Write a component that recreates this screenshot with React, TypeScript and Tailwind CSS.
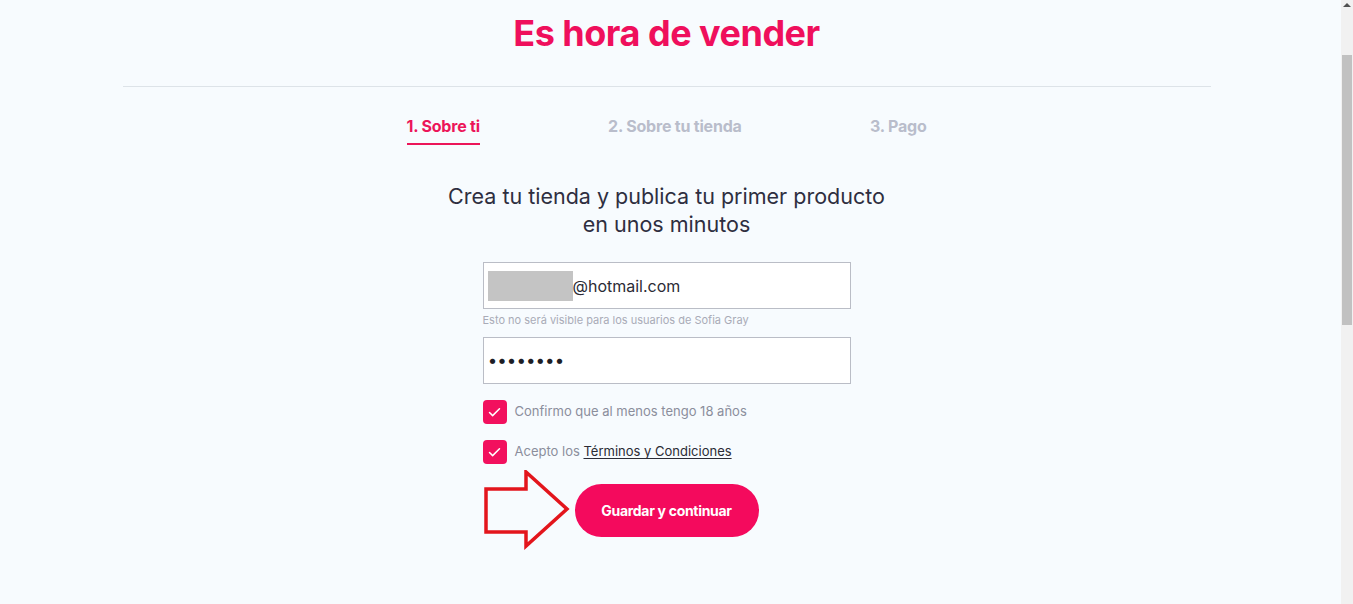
import { Check } from "lucide-react";

const font = { fontFamily: "Inter, 'Noto Sans', sans-serif" };

function StepTabs() {
  return (
    <div className="mx-auto flex w-[520px] justify-between text-[16px] font-bold tracking-[-0.2px]">
      <div className="flex flex-col items-start">
        <span className="text-[#ec1559]">1. Sobre ti</span>
        <span className="mt-[5px] h-[2px] w-full bg-[#ec1559]" />
      </div>
      <span className="text-[#b9bdcb]">2. Sobre tu tienda</span>
      <span className="text-[#b9bdcb]">3. Pago</span>
    </div>
  );
}

function CheckRow({ children }: { children: React.ReactNode }) {
  return (
    <div className="flex items-center gap-2">
      <div className="flex h-6 w-6 items-center justify-center rounded-[4px] bg-[#f2105e]">
        <Check className="h-[15px] w-[15px] text-white" strokeWidth={2.4} />
      </div>
      <span className="text-[13px] text-[#8b8e9c]">{children}</span>
    </div>
  );
}

function Arrow() {
  return (
    <svg width="88" height="80" viewBox="0 0 88 80">
      <path
        d="M3 19 L43 19 L43 2 L84 39 L43 76 L43 62 L3 62 Z"
        fill="none"
        stroke="#e3151c"
        strokeWidth="3.5"
        strokeLinejoin="miter"
      />
    </svg>
  );
}

export default function App() {
  return (
    <div className="flex h-[604px] w-full overflow-hidden" style={font}>
      <main className="flex-1 bg-[#f7fbfe] pr-[8px]">
        <h1 className="pt-[12px] text-center text-[36px] font-bold leading-[43px] tracking-[-0.5px] text-[#ef0f5c]">
          Es hora de vender
        </h1>
        <div className="mx-auto mt-[31px] h-px w-[1088px] bg-[#dde3e8]" />
        <div className="mt-[27px]">
          <StepTabs />
        </div>
        <p className="mx-auto mt-[37px] w-[455px] text-center text-[21.5px] leading-[28px] text-[#2e2e40]">
          Crea tu tienda y publica tu primer producto en unos minutos
        </p>
        <div className="mx-auto mt-[24px] w-[368px]">
          <div className="flex h-[47px] items-center border border-[#babdc6] bg-white pl-[4px]">
            <span className="h-[30px] w-[85px] bg-[#c4c4c4]" />
            <span className="text-[16px] text-[#2b2b35]">@hotmail.com</span>
          </div>
          <p className="mt-[3px] text-[11px] leading-[16px] text-[#a9abb7]">
            Esto no será visible para los usuarios de Sofia Gray
          </p>
          <div className="mt-[9px] flex h-[47px] items-center border border-[#babdc6] bg-white pl-[5px]">
            <span className="text-[17px] font-bold tracking-[1.5px] text-[#1d1d25]">••••••••</span>
          </div>
          <div className="mt-[16px] flex flex-col gap-[16px]">
            <CheckRow>Confirmo que al menos tengo 18 años</CheckRow>
            <CheckRow>
              Acepto los{" "}
              <span className="text-[#2b2b35] underline underline-offset-2">
                Términos y Condiciones
              </span>
            </CheckRow>
          </div>
          <div className="mt-[6px] flex items-center gap-[4px]">
            <Arrow />
            <button className="h-[53px] w-[184px] rounded-full bg-[#f40a5d] text-[14px] font-bold tracking-[-0.3px] text-white">
              Guardar y continuar
            </button>
          </div>
        </div>
      </main>
      <div className="flex w-[12px] flex-col bg-[#f1f1f1]">
        <div className="flex h-[17px] items-start justify-center pt-[3px]">
          <span className="h-0 w-0 border-x-[4px] border-b-[4px] border-x-transparent border-b-[#505050]" />
        </div>
        <div className="ml-[1px] mt-[38px] h-[270px] w-[10px] bg-[#c1c1c1]" />
      </div>
    </div>
  );
}
